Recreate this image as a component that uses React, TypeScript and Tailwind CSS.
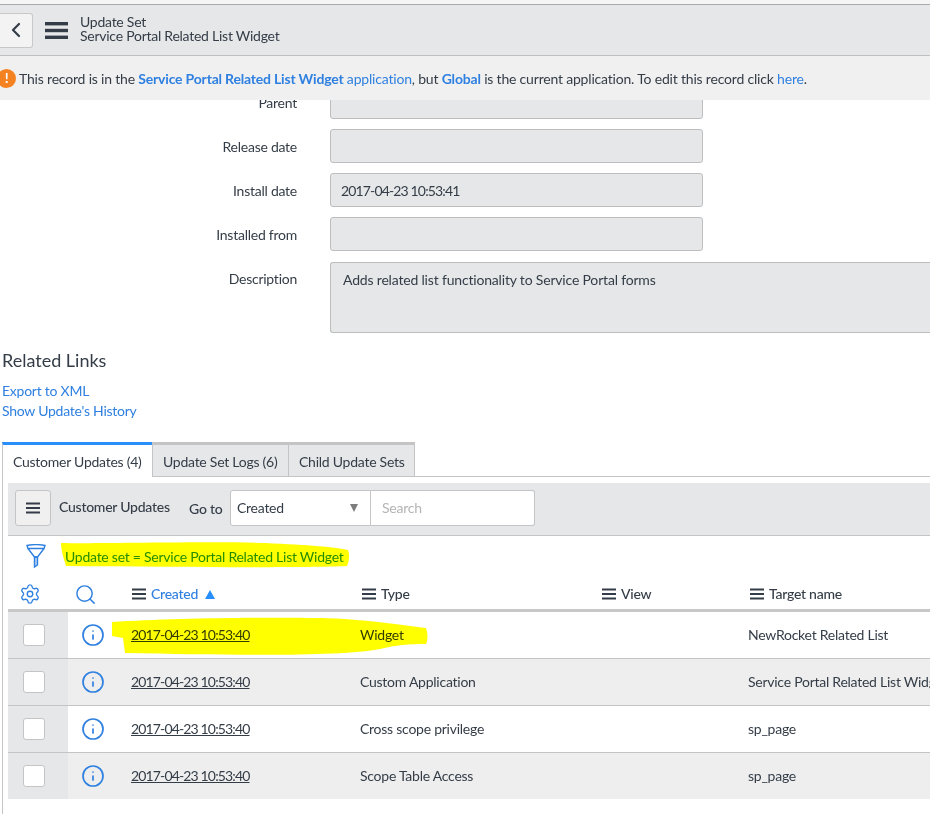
import { ChevronLeft, Info, Search, Settings } from "lucide-react";

const font = { fontFamily: '"Lato", "Liberation Sans", sans-serif' };

const Bars = ({ className }: { className: string }) => (
  <svg viewBox="0 0 14 12" className={className} fill="#343d47">
    <rect x="0" y="0.5" width="14" height="2" />
    <rect x="0" y="5" width="14" height="2" />
    <rect x="0" y="9.5" width="14" height="2" />
  </svg>
);

const fields = [
  { label: "Release date", value: "" },
  { label: "Install date", value: "2017-04-23 10:53:41" },
  { label: "Installed from", value: "" },
];

const rows = [
  { type: "Widget", target: "NewRocket Related List" },
  { type: "Custom Application", target: "Service Portal Related List Widget" },
  { type: "Cross scope privilege", target: "sp_page" },
  { type: "Scope Table Access", target: "sp_page" },
];

const fieldClass = "h-[34px] w-[373px] rounded-[3px] border border-[#bdbdbd] bg-[#e6e7e9]";

export default function App() {
  return (
    <div style={font} className="h-[814px] w-[930px] overflow-hidden bg-white text-[14px] leading-5 tracking-[-0.25px] text-[#343d47]">
      <div className="h-[5px] border-b border-[#a9a9a9] bg-[#f5f5f5]" />
      {/* header */}
      <div className="flex h-[51px] items-center border-b border-[#bfbfbf] bg-[#e6e7e9]">
        <button className="flex h-[35px] w-[33px] items-center justify-center rounded-r-[3px] border border-l-0 border-[#c8c8c8] bg-[#f3f3f3]">
          <ChevronLeft size={24} strokeWidth={2.2} color="#343d47" />
        </button>
        <svg viewBox="0 0 23 17" className="ml-3 h-[17px] w-[23px]" fill="#343d47">
          <rect x="0" y="0" width="23" height="3.4" />
          <rect x="0" y="6.8" width="23" height="3.4" />
          <rect x="0" y="13.6" width="23" height="3.4" />
        </svg>
        <div className="mb-[2px] ml-3 leading-[14.5px]">
          <div>Update Set</div>
          <div>Service Portal Related List Widget</div>
        </div>
      </div>
      {/* warning */}
      <div className="flex h-[44px] items-center whitespace-nowrap bg-[#f0f0f0]">
        <span className="-ml-[3px] mr-[3px] flex h-[19px] w-[19px] items-center justify-center rounded-full bg-[#f58220] text-[14px] font-bold text-white">
          !
        </span>
        <span className="pt-[2px] tracking-[-0.19px]">
          This record is in the{" "}
          <a className="font-bold text-[#2f80e0]">Service Portal Related List Widget</a>{" "}
          <a className="text-[#2f80e0]">application</a>, but{" "}
          <a className="font-bold text-[#2f80e0]">Global</a> is the current application. To edit this record click{" "}
          <a className="text-[#2f80e0]">here</a>.
        </span>
      </div>
      {/* form */}
      <div className="flex flex-col gap-[10px]">
        <div className="flex h-[19px] items-end overflow-hidden">
          <div className="w-[297px] shrink-0 self-start text-right">
            <span className="relative -top-[7px]">Parent</span>
          </div>
          <div className={`ml-[33px] ${fieldClass} shrink-0`} />
        </div>
        {fields.map((f) => (
          <div key={f.label} className="flex items-center">
            <div className="w-[297px] shrink-0 pt-[2px] text-right">{f.label}</div>
            <div className={`ml-[33px] flex items-center px-[10px] pt-[2px] ${f.value ? "tracking-[-0.85px]" : ""} ${fieldClass}`}>{f.value}</div>
          </div>
        ))}
        <div className="mt-px flex items-start">
          <div className="mt-[7px] w-[297px] shrink-0 text-right">Description</div>
          <div className="ml-[33px] h-[71px] flex-1 rounded-l-[3px] border border-r-0 border-[#bdbdbd] bg-[#e6e7e9] pl-[12px] pt-[7px] tracking-[-0.18px]">
            Adds related list functionality to Service Portal forms
          </div>
        </div>
      </div>
      {/* related links */}
      <div className="mt-[15px] pl-[2px] text-[18px] leading-6 tracking-normal">Related Links</div>
      <div className="mt-[9px] pl-[2px] text-[#2f80e0]">
        <div>Export to XML</div>
        <div>Show Update's History</div>
      </div>
      {/* tabs */}
      <div className="ml-[2px] mt-[21px] flex h-[35px]">
        <div className="flex w-[150px] items-center border-l border-t-[3px] border-l-[#c4c4c4] border-t-[#278efc] pl-[10px] pt-[2px]">
          Customer Updates (4)
        </div>
        <div className="flex w-[136px] items-center border-b border-l border-t-[3px] border-[#c4c4c4] bg-[#e6e7e9] pl-[10px] pt-[2px]">
          Update Set Logs (6)
        </div>
        <div className="flex w-[127px] items-center border-x border-b border-t-[3px] border-[#c4c4c4] bg-[#e6e7e9] pl-[10px] pt-[2px]">
          Child Update Sets
        </div>
        <div className="flex-1 border-b border-[#c4c4c4]" />
      </div>
      {/* list */}
      <div className="ml-[2px] h-[400px] border-l border-[#c4c4c4] pl-[5px] pt-[6px]">
        <div className="flex h-[53px] items-center border-b border-[#c4c4c4] bg-[#e6e7e9] pb-[2px] pl-[7px]">
          <button className="flex h-[36px] w-[36px] items-center justify-center rounded-[3px] border border-[#c4c4c4] bg-[#f0f0f0]">
            <Bars className="h-3 w-[14px]" />
          </button>
          <span className="mb-[2px] ml-2 w-[130px] font-medium">Customer Updates</span>
          <span className="mt-[1px] w-[41px] font-medium">Go to</span>
          <div className="flex h-[36px] w-[141px] items-center justify-between rounded-l-[3px] border border-[#c4c4c4] bg-white pl-[6px] pr-[12px]">
            Created
            <span className="h-0 w-0 border-x-[4.5px] border-t-[8px] border-x-transparent border-t-[#7d7d7d]" />
          </div>
          <div className="flex h-[36px] w-[164px] items-center rounded-r-[3px] border border-l-0 border-[#c4c4c4] bg-white pl-[11px] text-[#b4b4b4]">
            Search
          </div>
        </div>
        {/* filter */}
        <div className="relative flex h-[39px] items-center whitespace-nowrap text-[#278efc]">
          <svg viewBox="0 0 20 24" className="ml-[18px] h-[24px] w-[20px]" fill="none" stroke="#2f80e0" strokeWidth="1.4">
            <path d="M1 1.5C6 .5 14 .5 19 1.5L18 4.5H2Z" />
            <path d="M2 4.5L8.5 13H11.5L18 4.5" />
            <path d="M8.5 13H11.5V21L8.5 23Z" fill="#2f80e0" fillOpacity="0.35" />
          </svg>
          <span className="ml-[19px] pt-[2px]">Update set = Service Portal Related List Widget</span>
          <svg viewBox="0 0 290 26" className="pointer-events-none absolute left-[52px] top-[6px] h-[26px] w-[290px] mix-blend-multiply">
            <path d="M1 1C40 2 150-1 205 1C250 3 275 5 288 8C290 13 289 20 287 24C240 26 120 25 6 24C4 17 1 9 1 1Z" fill="#ffff00" />
          </svg>
        </div>
        {/* table header */}
        <div className="flex h-[37px] items-center border-b-[3px] border-[#c8c8c8] pt-[4px] font-medium">
          <div className="flex w-[60px] pl-[11px]">
            <Settings size={22} strokeWidth={1.5} color="#2f80e0" />
          </div>
          <div className="flex w-[55px] pl-[6px]">
            <Search size={23} strokeWidth={1.5} color="#2f80e0" />
          </div>
          <div className="flex w-[229px] items-center pl-[9px] text-[#2f80e0]">
            <Bars className="mr-[5px] h-3 w-[14px]" />
            Created
            <span className="ml-[7px] h-0 w-0 border-x-[5.5px] border-b-[9px] border-x-transparent border-b-[#278efc]" />
          </div>
          <div className="flex w-[240px] items-center pl-[10px]">
            <Bars className="mr-[5px] h-3 w-[14px]" />
            Type
          </div>
          <div className="flex w-[148px] items-center pl-[10px]">
            <Bars className="mr-[5px] h-3 w-[14px]" />
            View
          </div>
          <div className="flex items-center pl-[10px]">
            <Bars className="mr-[5px] h-3 w-[14px]" />
            Target name
          </div>
        </div>
        {/* rows */}
        {rows.map((r, i) => (
          <div
            key={i}
            className={`relative flex items-center whitespace-nowrap ${i < 3 ? "h-[47px] border-b border-[#c4c4c4]" : "h-[46px]"} ${i % 2 ? "bg-[#eeeeee]" : "bg-white"}`}
          >
            <div className="flex h-full w-[60px] shrink-0 items-center bg-[#e6e7e9] pl-[15px]">
              <span className="h-[22px] w-[22px] rounded-[3px] border border-[#c4c4c4] bg-white" />
            </div>
            <div className={`flex h-full w-[55px] shrink-0 items-center pl-[13px] ${i % 2 ? "" : "bg-white"}`}>
              <Info size={24} strokeWidth={1.7} color="#2f80e0" />
            </div>
            <div className="w-[229px] shrink-0 pl-[8px] tracking-[-0.85px] underline">2017-04-23 10:53:40</div>
            <div className="w-[240px] shrink-0 pl-[8px]">{r.type}</div>
            <div className="w-[148px] shrink-0" />
            <div className="pl-[8px]">{r.target}</div>
            {i === 0 && (
              <svg viewBox="0 0 318 40" className="pointer-events-none absolute left-[102px] top-[5px] h-[40px] w-[318px] mix-blend-multiply">
                <path d="M2 5C60 1 150 0 210 1C255 2 290 8 316 11C318 17 318 23 316 27C300 27 285 28 270 32C230 40 120 38 15 36L13 21L2 19Z" fill="#ffff00" />
              </svg>
            )}
          </div>
        ))}
      </div>
    </div>
  );
}
